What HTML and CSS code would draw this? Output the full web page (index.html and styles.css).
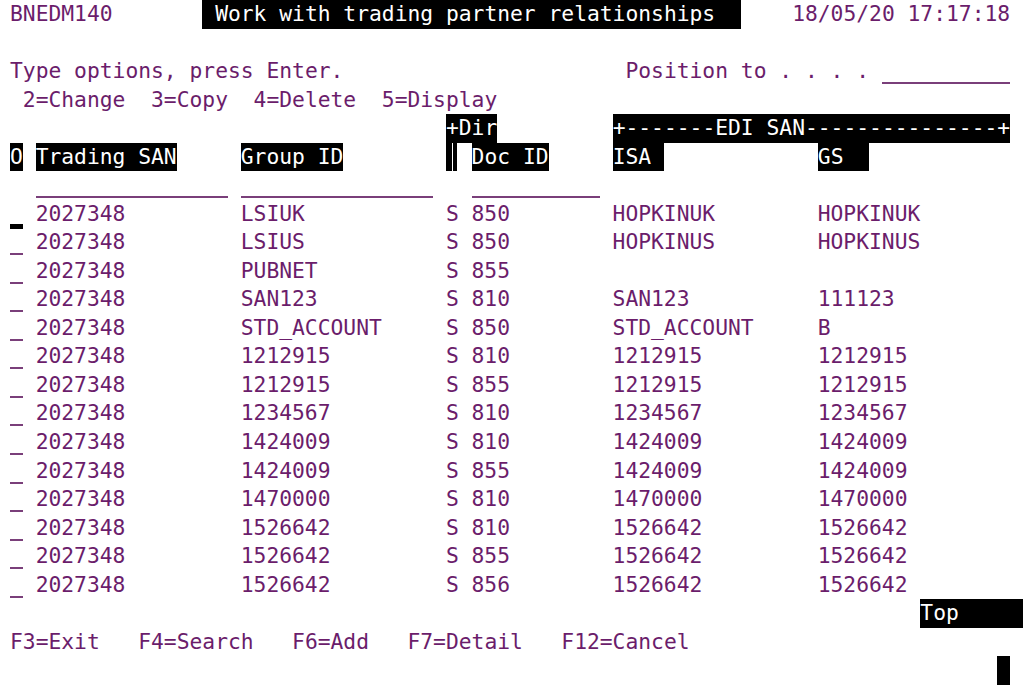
FILE: index.html
```html
<!DOCTYPE html>
<html lang="en">
<head>
<meta charset="utf-8">
<title>BNEDM140 - Work with trading partner relationships</title>
<link rel="stylesheet" href="styles.css">
</head>
<body>
<div class="screen">
<div class="row">BNEDM140       <span class="rev"> Work with trading partner relationships  </span>    18/05/20 17:17:18</div>
<div class="row"></div>
<div class="row">Type options, press Enter.                      Position to . . . . <span class="fld">          </span></div>
<div class="row"> 2=Change  3=Copy  4=Delete  5=Display</div>
<div class="row">                                  <span class="rev">+Dir</span>         <span class="rev">+-------EDI SAN---------------+</span></div>
<div class="row"><span class="rev">O</span> <span class="rev">Trading SAN</span>     <span class="rev">Group ID</span>        <span class="dirbar"> </span> <span class="rev">Doc ID</span>     <span class="rev">ISA </span>            <span class="rev">GS  </span></div>
<div class="row">  <span class="fld">               </span> <span class="fld">               </span>   <span class="fld">          </span></div>

<div class="row rec"><span class="fld opt cur"> </span><span>2027348</span><span>LSIUK</span><span>S</span><span>850</span><span>HOPKINUK</span><span>HOPKINUK</span></div>
<div class="row rec"><span class="fld opt"> </span><span>2027348</span><span>LSIUS</span><span>S</span><span>850</span><span>HOPKINUS</span><span>HOPKINUS</span></div>
<div class="row rec"><span class="fld opt"> </span><span>2027348</span><span>PUBNET</span><span>S</span><span>855</span><span></span><span></span></div>
<div class="row rec"><span class="fld opt"> </span><span>2027348</span><span>SAN123</span><span>S</span><span>810</span><span>SAN123</span><span>111123</span></div>
<div class="row rec"><span class="fld opt"> </span><span>2027348</span><span>STD_ACCOUNT</span><span>S</span><span>850</span><span>STD_ACCOUNT</span><span>B</span></div>
<div class="row rec"><span class="fld opt"> </span><span>2027348</span><span>1212915</span><span>S</span><span>810</span><span>1212915</span><span>1212915</span></div>
<div class="row rec"><span class="fld opt"> </span><span>2027348</span><span>1212915</span><span>S</span><span>855</span><span>1212915</span><span>1212915</span></div>
<div class="row rec"><span class="fld opt"> </span><span>2027348</span><span>1234567</span><span>S</span><span>810</span><span>1234567</span><span>1234567</span></div>
<div class="row rec"><span class="fld opt"> </span><span>2027348</span><span>1424009</span><span>S</span><span>810</span><span>1424009</span><span>1424009</span></div>
<div class="row rec"><span class="fld opt"> </span><span>2027348</span><span>1424009</span><span>S</span><span>855</span><span>1424009</span><span>1424009</span></div>
<div class="row rec"><span class="fld opt"> </span><span>2027348</span><span>1470000</span><span>S</span><span>810</span><span>1470000</span><span>1470000</span></div>
<div class="row rec"><span class="fld opt"> </span><span>2027348</span><span>1526642</span><span>S</span><span>810</span><span>1526642</span><span>1526642</span></div>
<div class="row rec"><span class="fld opt"> </span><span>2027348</span><span>1526642</span><span>S</span><span>855</span><span>1526642</span><span>1526642</span></div>
<div class="row rec"><span class="fld opt"> </span><span>2027348</span><span>1526642</span><span>S</span><span>856</span><span>1526642</span><span>1526642</span></div>

<div class="row end"><span class="rev">Top     </span></div>
<div class="row">F3=Exit   F4=Search   F6=Add   F7=Detail   F12=Cancel</div>
<div class="row end cursor-row"><span class="block"> </span></div>
</div>
</body>
</html>
```
FILE: styles.css
```css
html, body {
  margin: 0;
  padding: 0;
  background: #ffffff;
  overflow: hidden;
}

/* 80-column terminal grid; column 0 is the attribute column, kept as padding */
.screen {
  width: 79ch;
  padding-left: calc(1ch - 2.83px);
  font-family: "DejaVu Sans Mono", "Liberation Mono", monospace;
  font-size: 21.31px;
  color: #6b1d6b;
}

.row {
  height: calc(685px / 24);
  line-height: calc(685px / 24);
  white-space: pre;
}

.rev {
  display: inline-block;
  vertical-align: top;
  height: 100%;
  background: #000000;
  color: #ffffff;
}

.fld {
  display: inline-block;
  vertical-align: top;
  height: 25px;
  border-bottom: 2px solid #7a3f7a;
}

.fld.cur {
  height: 24px;
  border-bottom: 5px solid #000000;
}

.dirbar {
  display: inline-block;
  vertical-align: top;
  height: 100%;
  background: linear-gradient(to right, #000 0 6px, #fff 6px 7px, #000 7px 11px, transparent 11px);
}

/* data record rows: option, Trading SAN, Group ID, Dir, Doc ID, ISA, GS */
.rec {
  display: grid;
  grid-template-columns: 2ch 16ch 16ch 2ch 11ch 16ch 1fr;
}

.rec .opt {
  width: 1ch;
}

.end {
  display: flex;
  justify-content: flex-end;
}

.cursor-row {
  padding-right: 1ch;
}

.block {
  display: inline-block;
  width: 1ch;
  height: 100%;
  background: #000000;
}
```
